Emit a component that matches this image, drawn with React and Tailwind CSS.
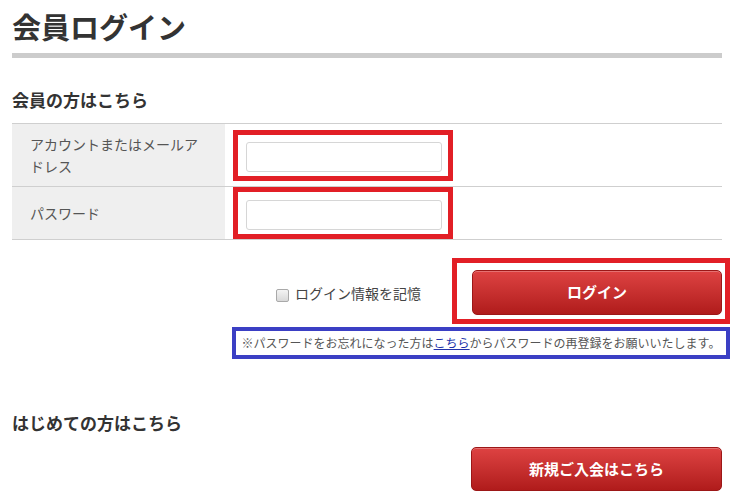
import React from 'react';

const RedMark = ({ className, children }) => (
  <div className={`border-[5px] border-[#e21f26] ${className}`}>{children}</div>
);

const redButton =
  'rounded-[5px] border border-[#9c1717] bg-gradient-to-b from-[#de4242] to-[#b01b1b] text-white font-bold text-[15px] shadow-[inset_0_1px_0_rgba(255,255,255,0.25)]';

export default function App() {
  return (
    <div className="w-[733px] h-[500px] bg-white font-['Noto_Sans_CJK_JP','Noto_Sans',sans-serif] text-[#333] overflow-hidden">
      <div className="pl-3 w-[722px]">
        {/* Title */}
        <h1 className="pt-[8px] text-[29px] leading-[36px] font-bold text-[#333]">会員ログイン</h1>
        <div className="mt-[9px] h-[5px] bg-[#cccccc]" />

        {/* Member login */}
        <h2 className="mt-[30px] text-[17px] leading-[24px] font-bold">会員の方はこちら</h2>

        <div className="mt-[11px] border-t border-[#cfcfcf] text-[14px] text-[#555]">
          <div className="flex h-[63px] border-b border-[#cfcfcf]">
            <div className="w-[213px] bg-[#efefef] pl-[18px] pr-[16px] flex items-center leading-[22px]">
              アカウントまたはメールアドレス
            </div>
            <div className="flex-1 pl-2 flex items-center">
              <RedMark className="w-[220px] h-[51px] p-[7px_6px_4px_8px]">
                <input type="text" className="w-[196px] h-[30px] border border-[#d6d6d6] rounded-[3px] bg-white outline-none" />
              </RedMark>
            </div>
          </div>
          <div className="flex h-[53px] border-b border-[#cfcfcf]">
            <div className="w-[213px] bg-[#efefef] pl-[18px] flex items-center">パスワード</div>
            <div className="flex-1 pl-2 flex items-center">
              <RedMark className="w-[220px] h-[52px] p-[8px_6px_5px_8px]">
                <input type="password" className="w-[196px] h-[30px] border border-[#d6d6d6] rounded-[3px] bg-white outline-none" />
              </RedMark>
            </div>
          </div>
        </div>

        {/* Remember + login button */}
        <div className="mt-[18px] flex justify-end items-center -mr-[8px]">
          <label className="flex items-center text-[14px] text-[#444] mr-[31px] mt-[4px]">
            <span className="w-[13px] h-[13px] rounded-[2px] border border-[#a9a9a9] bg-gradient-to-b from-[#f4f4f4] to-[#d8d8d8] mr-[6px] mt-[4px]" />
            ログイン情報を記憶
          </label>
          <RedMark className="w-[278px] h-[66px] pt-[7px] pl-[15px]">
            <button className={`${redButton} w-[250px] h-[45px]`}>ログイン</button>
          </RedMark>
        </div>

        <div className="flex justify-end -mr-[8px] mt-[3px]">
          <div className="w-[498px] h-[32px] border-[4px] border-[#3b3fc4] flex items-center justify-center text-[12px] text-[#555] whitespace-nowrap">
            ※パスワードをお忘れになった方は<a href="#" className="text-[#2233aa] underline">こちら</a>からパスワードの再登録をお願いいたします。
          </div>
        </div>

        {/* New member */}
        <h2 className="mt-[52px] text-[17px] leading-[24px] font-bold">はじめての方はこちら</h2>
        <div className="mt-[12px] flex justify-end">
          <button className={`${redButton} w-[251px] h-[44px]`}>新規ご入会はこちら</button>
        </div>
      </div>
    </div>
  );
}
